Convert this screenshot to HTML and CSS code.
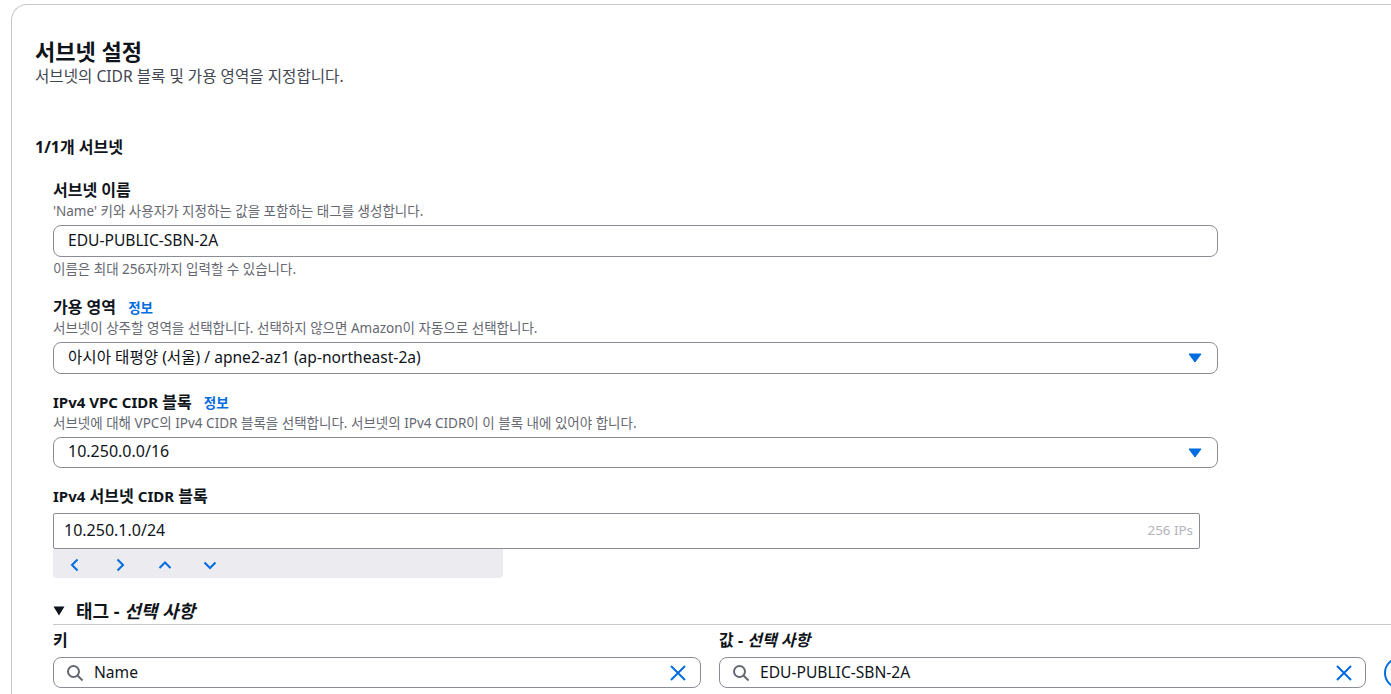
FILE: index.html
```html
<!DOCTYPE html>
<html lang="ko">
<head>
    <meta charset="UTF-8">
    <title>서브넷 설정</title>
    <link rel="stylesheet" href="styles.css">
</head>
<body>
    <div class="card">
        <h2>서브넷 설정</h2>
        <p class="card-desc">서브넷의 CIDR 블록 및 가용 영역을 지정합니다.</p>

        <h3>1/1개 서브넷</h3>

        <div class="subnet">
            <div class="field field-name">
                <div class="label">서브넷 이름</div>
                <div class="hint">'Name' 키와 사용자가 지정하는 값을 포함하는 태그를 생성합니다.</div>
                <div class="control"><span class="value">EDU-PUBLIC-SBN-2A</span></div>
                <div class="hint hint-after">이름은 최대 256자까지 입력할 수 있습니다.</div>
            </div>

            <div class="field field-az">
                <div class="label">가용 영역 <a class="info">정보</a></div>
                <div class="hint">서브넷이 상주할 영역을 선택합니다. 선택하지 않으면 Amazon이 자동으로 선택합니다.</div>
                <div class="control select">
                    <span class="value">아시아 태평양 (서울) / apne2-az1 (ap-northeast-2a)</span>
                    <svg class="caret" width="14" height="10" viewBox="0 0 14 10"><path d="M1 1h12L7 9z" fill="#006ce0" stroke="#006ce0" stroke-linejoin="round"/></svg>
                </div>
            </div>

            <div class="field field-vpc">
                <div class="label"><span class="latin">IPv4 VPC CIDR</span> 블록 <a class="info">정보</a></div>
                <div class="hint">서브넷에 대해 VPC의 IPv4 CIDR 블록을 선택합니다. 서브넷의 IPv4 CIDR이 이 블록 내에 있어야 합니다.</div>
                <div class="control select">
                    <span class="value digits">10.250.0.0/16</span>
                    <svg class="caret" width="14" height="10" viewBox="0 0 14 10"><path d="M1 1h12L7 9z" fill="#006ce0" stroke="#006ce0" stroke-linejoin="round"/></svg>
                </div>
            </div>

            <div class="field field-cidr">
                <div class="label"><span class="latin">IPv4</span> 서브넷 <span class="latin">CIDR</span> 블록</div>
                <div class="cidr-input">
                    <span class="value digits">10.250.1.0/24</span>
                    <span class="ip-count">256 IPs</span>
                </div>
                <div class="stepper">
                    <svg width="16" height="16" viewBox="0 0 16 16"><path d="M10.5 2.5 5 8l5.5 5.5"/></svg>
                    <svg width="16" height="16" viewBox="0 0 16 16"><path d="M5.5 2.5 11 8l-5.5 5.5"/></svg>
                    <svg width="16" height="16" viewBox="0 0 16 16"><path d="M2.5 11 8 5.5l5.5 5.5"/></svg>
                    <svg width="16" height="16" viewBox="0 0 16 16"><path d="M2.5 5.5 8 11l5.5-5.5"/></svg>
                </div>
            </div>

            <div class="tags">
                <div class="tags-title">
                    <svg width="12" height="10" viewBox="0 0 12 10"><path d="M0.5 0.5h11L6 9.5z" fill="#0f141a"/></svg>
                    <span>태그 - <em>선택 사항</em></span>
                </div>
                <div class="tag-row">
                    <div class="tag-col">
                        <div class="label">키</div>
                        <div class="control search">
                            <svg class="search-icon" width="18" height="18" viewBox="0 0 18 18"><circle cx="7.5" cy="7.5" r="5.5"/><path d="m11.5 11.5 5 5"/></svg>
                            <span class="value">Name</span>
                            <svg class="clear" width="18" height="18" viewBox="0 0 18 18"><path d="m2 2 14 14M16 2 2 16"/></svg>
                        </div>
                    </div>
                    <div class="tag-col">
                        <div class="label">값 - <em>선택 사항</em></div>
                        <div class="control search">
                            <svg class="search-icon" width="18" height="18" viewBox="0 0 18 18"><circle cx="7.5" cy="7.5" r="5.5"/><path d="m11.5 11.5 5 5"/></svg>
                            <span class="value">EDU-PUBLIC-SBN-2A</span>
                            <svg class="clear" width="18" height="18" viewBox="0 0 18 18"><path d="m2 2 14 14M16 2 2 16"/></svg>
                        </div>
                    </div>
                    <div class="round-btn"></div>
                </div>
            </div>
        </div>
    </div>
</body>
</html>
```

FILE: styles.css
```css
html, body {
    margin: 0;
    height: 694px;
    overflow: hidden;
    background-color: white;
}

body {
    font-family: "Noto Sans", "Noto Sans CJK KR", sans-serif;
    color: #0f141a;
    padding: 4px 0 0 11px;
    box-sizing: border-box;
}

.card {
    width: 1380px;
    height: 690px;
    overflow: hidden;
    box-sizing: border-box;
    border: 1px solid #c6c6cd;
    border-right: none;
    border-bottom: none;
    border-radius: 16px 0 0 0;
    padding: 33px 0 0 23px;
}

h2 {
    margin: 0;
    font-size: 22px;
    line-height: 26px;
    font-weight: 700;
}

.card-desc {
    margin: 2px 0 0 0;
    font-size: 15.6px;
    line-height: 20px;
    color: #424650;
}

h3 {
    margin: 51px 0 0 0;
    font-size: 16px;
    line-height: 20px;
    font-weight: 700;
}

.subnet {
    padding-left: 18px;
    margin-top: 23px;
}

.label {
    height: 20px;
    font-size: 16px;
    line-height: 20px;
    font-weight: 700;
    white-space: nowrap;
}

.latin {
    font-size: 15px;
}

.info {
    margin-left: 8px;
    font-size: 13.5px;
    color: #006ce0;
}

.hint {
    height: 16px;
    margin-top: 3px;
    font-size: 13.5px;
    line-height: 16px;
    color: #656871;
    white-space: nowrap;
}

.hint-after {
    margin-top: 4px;
}

.control {
    box-sizing: border-box;
    width: 1165px;
    height: 32px;
    margin-top: 6px;
    padding: 0 14px;
    display: flex;
    align-items: center;
    justify-content: space-between;
    border: 1px solid #8c8c94;
    border-radius: 8px;
    font-size: 15.6px;
}

.value {
    padding-bottom: 3px;
}

.digits {
    font-size: 16px;
}

.field-az {
    margin-top: 20px;
}

.field-az .hint,
.field-vpc .hint {
    margin-top: 3px;
}

.field-az .control,
.field-vpc .control {
    margin-top: 6px;
}

.field-vpc {
    margin-top: 18px;
}

.field-vpc .control {
    height: 31px;
}

.field-cidr {
    margin-top: 18px;
}

.caret {
    margin-right: 1px;
}

.cidr-input {
    box-sizing: border-box;
    width: 1147px;
    height: 36px;
    margin-top: 7px;
    padding: 0 6px 0 10px;
    display: flex;
    align-items: center;
    justify-content: space-between;
    border: 1px solid #8c8c94;
    border-radius: 2px;
    font-size: 16px;
}

.ip-count {
    font-size: 13.4px;
    padding-bottom: 2px;
    color: #b4b4bb;
}

.stepper {
    width: 450px;
    height: 29px;
    display: flex;
    align-items: center;
    gap: 29px;
    padding: 2px 0 0 14px;
    box-sizing: border-box;
    background-color: #ebebf0;
    border-radius: 0 0 4px 4px;
}

.stepper path {
    fill: none;
    stroke: #006ce0;
    stroke-width: 2;
}

.tags {
    margin-top: 20px;
}

.tags-title {
    display: flex;
    align-items: center;
    gap: 11px;
    height: 26px;
    font-size: 18px;
    line-height: 24px;
    font-weight: 700;
    border-bottom: 1px solid #c6c6cd;
}

.tag-row {
    display: flex;
    gap: 18px;
    margin-top: 5px;
}

.tag-col .control {
    width: 648px;
    height: 31px;
    margin-top: 7px;
}

.tag-col + .tag-col .control {
    width: 647px;
}

.search {
    justify-content: flex-start;
    gap: 10px;
    padding: 0 12px;
}

.search .value {
    padding-bottom: 1px;
}

.search-icon circle,
.search-icon path {
    fill: none;
    stroke: #656871;
    stroke-width: 2;
}

.clear {
    margin-left: auto;
}

.tag-col:first-child .clear {
    margin-right: 1px;
}

.clear path {
    fill: none;
    stroke: #006ce0;
    stroke-width: 2;
}

.round-btn {
    flex-shrink: 0;
    width: 32px;
    height: 32px;
    margin-top: 27px;
    box-sizing: border-box;
    border: 2px solid #006ce0;
    border-radius: 50%;
}
```
